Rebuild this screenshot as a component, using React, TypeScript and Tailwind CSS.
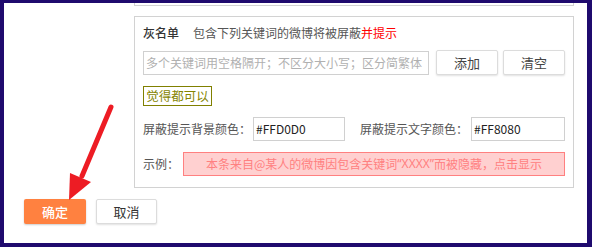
export default function App() {
  const font = { fontFamily: '"Noto Sans CJK SC", "Noto Sans", sans-serif' }

  return (
    <div
      className="w-[592px] h-[247px] bg-[#1f0a6e] pt-[3px] pl-[4px] pr-[5px] pb-[4px] text-[12px] leading-none"
      style={font}
    >
      <div className="relative h-full bg-white">
        {/* bottom edge of the panel above */}
        <div className="ml-[130px] w-[440px] h-[3px] border-x border-b border-[#d2d2d2]" />

        {/* grey list panel */}
        <div className="ml-[130px] mt-[10px] w-[440px] h-[172px] border border-[#d2d2d2] pl-[8px] pr-[7px] pt-[4px]">
          <div className="flex h-[24px] items-center">
            <span className="text-[#333] font-medium">灰名单</span>
            <span className="ml-[14px] text-[#555]">
              包含下列关键词的微博将被屏蔽<span className="text-[#ff0000]">并提示</span>
            </span>
          </div>

          <div className="mt-[5px] flex h-[25px] items-end">
            <div className="flex h-[24px] w-[286px] items-center border border-[#d0d0d0] px-[2px] text-[#b0b0b0]">
              多个关键词用空格隔开；不区分大小写；区分简繁体
            </div>
            <button className="ml-[7px] h-[25px] w-[62px] self-start rounded-[2px] border border-[#dcdcdc] bg-white text-[13px] text-[#444] shadow-[0_1px_2px_rgba(0,0,0,0.12)]">
              添加
            </button>
            <button className="ml-[5px] h-[25px] w-[62px] self-start rounded-[2px] border border-[#dcdcdc] bg-white text-[13px] text-[#444] shadow-[0_1px_2px_rgba(0,0,0,0.12)]">
              清空
            </button>
          </div>

          <div className="mt-[11px] flex h-[20px]">
            <span className="flex w-[69px] items-center justify-center border border-[#808000] text-[12.5px] text-[#858500]">
              觉得都可以
            </span>
          </div>

          <div className="mt-[11px] flex h-[24px] items-center text-[#555]">
            <span className="w-[110px]">屏蔽提示背景颜色：</span>
            <div className="flex h-[24px] w-[92px] items-center border border-[#d0d0d0] px-[2px] text-[#222]">
              #FFD0D0
            </div>
            <span className="ml-[15px] w-[111px]">屏蔽提示文字颜色：</span>
            <div className="flex h-[24px] w-[94px] items-center border border-[#d0d0d0] px-[2px] text-[#222]">
              #FF8080
            </div>
          </div>

          <div className="mt-[11px] flex h-[24px] items-center">
            <span className="w-[40px] text-[#555]">示例：</span>
            <div className="flex h-[24px] w-[382px] items-center justify-center border border-[#ff8080] bg-[#ffd0d0] text-[#ff8080]">
              本条来自@某人的微博因包含关键词
              <span className="font-['Noto_Sans',sans-serif]">“XXXX”</span>
              而被隐藏，点击显示
            </div>
          </div>
        </div>

        {/* action buttons */}
        <div className="ml-[20px] mt-[11px] flex gap-[10px]">
          <button className="h-[25px] w-[62px] rounded-[2px] bg-[#ff8140] text-[13px] font-medium text-white shadow-[0_1px_2px_rgba(0,0,0,0.2)]">
            确定
          </button>
          <button className="h-[25px] w-[61px] rounded-[2px] border border-[#dcdcdc] bg-white text-[13px] text-[#333] shadow-[0_1px_2px_rgba(0,0,0,0.12)]">
            取消
          </button>
        </div>

        {/* annotation arrow */}
        <svg
          className="pointer-events-none absolute left-[-4px] top-[-3px]"
          width="592"
          height="247"
          viewBox="0 0 592 247"
        >
          <line x1="111" y1="107" x2="82" y2="176" stroke="#ed1c24" strokeWidth="5" strokeLinecap="round" />
          <polygon points="70,173 91,182 69,200" fill="#ed1c24" />
        </svg>
      </div>
    </div>
  )
}
